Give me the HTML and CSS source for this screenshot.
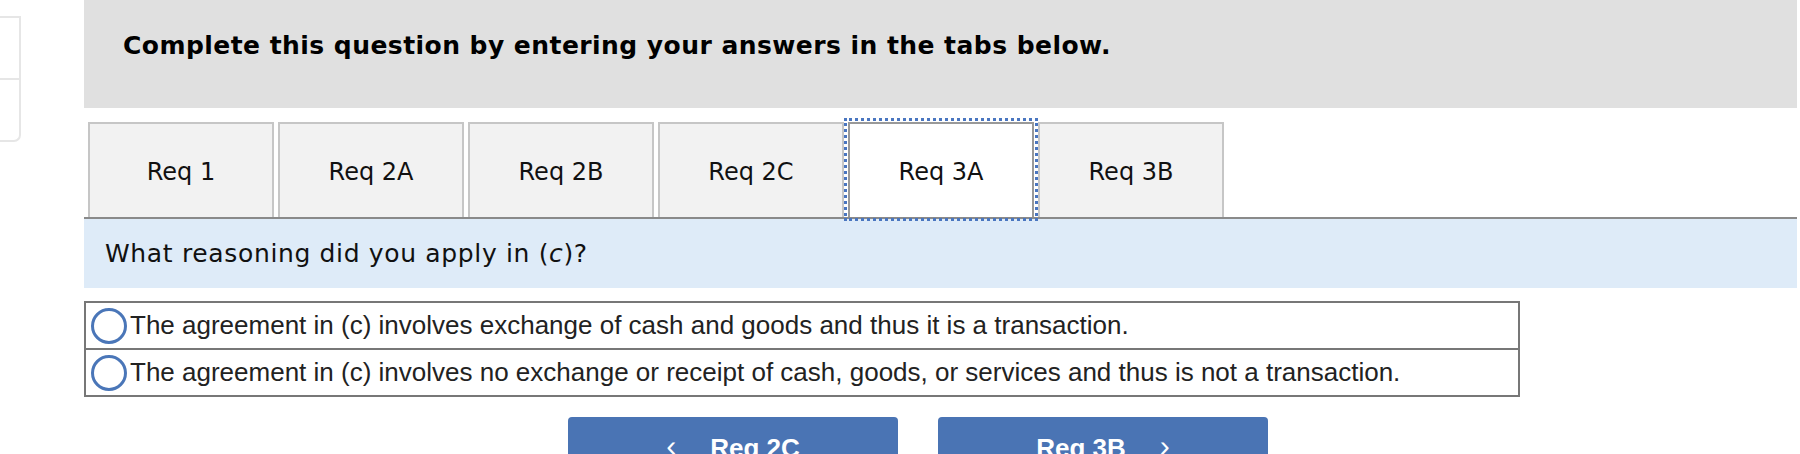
FILE: index.html
```html
<!DOCTYPE html>
<html>
<head>
<meta charset="utf-8">
<link rel="stylesheet" href="styles.css">
</head>
<body>
<div class="page">
  <div class="side">
    <div class="side-cell"></div>
    <div class="side-cell side-last"></div>
  </div>
  <div class="main">
    <div class="header">Complete this question by entering your answers in the tabs below.</div>
    <div class="tabs">
      <div class="tab">Req 1</div>
      <div class="tab">Req 2A</div>
      <div class="tab">Req 2B</div>
      <div class="tab">Req 2C</div>
      <div class="tab tab-active">Req 3A</div>
      <div class="tab">Req 3B</div>
    </div>
    <div class="question">What reasoning did you apply in (<i>c</i>)?</div>
    <div class="options">
      <div class="option"><span class="radio"></span><span class="opt-text">The agreement in (c) involves exchange of cash and goods and thus it is a transaction.</span></div>
      <div class="option"><span class="radio"></span><span class="opt-text">The agreement in (c) involves no exchange or receipt of cash, goods, or services and thus is not a transaction.</span></div>
    </div>
    <div class="nav">
      <div class="btn"><span class="chev">&lsaquo;</span><span>Req 2C</span></div>
      <div class="btn"><span>Req 3B</span><span class="chev">&rsaquo;</span></div>
    </div>
  </div>
</div>
</body>
</html>
```

FILE: styles.css
```css
html, body {
  margin: 0;
  padding: 0;
  background: #ffffff;
}
body {
  width: 1800px;
  height: 454px;
  overflow: hidden;
}
.page {
  display: flex;
  align-items: flex-start;
}
.side {
  width: 21px;
  margin-top: 16px;
  flex-shrink: 0;
  display: flex;
  flex-direction: column;
}
.side-cell {
  height: 60px;
  border: 2px solid #e6e6e6;
  border-left: none;
}
.side-last {
  border-top: none;
  border-bottom-right-radius: 7px;
}
.main {
  margin-left: 63px;
  width: 1713px;
  display: flex;
  flex-direction: column;
}
.header {
  height: 108px;
  background: #e0e0e0;
  box-sizing: border-box;
  padding: 31px 0 0 39px;
  font-family: "DejaVu Sans", Verdana, sans-serif;
  font-weight: bold;
  font-size: 25px;
  letter-spacing: 0.45px;
  color: #000;
}
.tabs {
  display: flex;
  gap: 4px;
  margin-top: 14px;
  padding-left: 4px;
  height: 95px;
}
.tab {
  width: 186px;
  box-sizing: border-box;
  border: 2px solid #c6c6c6;
  border-bottom: none;
  background: #f2f2f2;
  display: flex;
  align-items: center;
  justify-content: center;
  font-family: "DejaVu Sans", Verdana, sans-serif;
  font-size: 24px;
  color: #111;
  padding-top: 2px;
}
.tab-active {
  background: #ffffff;
  border-color: #999999;
  outline: 3px dotted #4a76c0;
  outline-offset: 1px;
  position: relative;
  z-index: 1;
}
.question {
  border-top: 2px solid #8a8a8a;
  background: #deebf8;
  height: 71px;
  box-sizing: border-box;
  padding: 20px 0 0 21px;
  font-family: "DejaVu Sans", Verdana, sans-serif;
  font-size: 25px;
  letter-spacing: 0.65px;
  color: #111;
}
.options {
  margin-top: 13px;
  width: 1436px;
  border: 2px solid #777777;
  box-sizing: border-box;
}
.option {
  height: 45px;
  display: flex;
  align-items: center;
  padding-left: 5px;
}
.option + .option {
  border-top: 2px solid #777777;
}
.radio {
  width: 30px;
  height: 30px;
  border: 3px solid #4a76b8;
  border-radius: 50%;
  flex-shrink: 0;
  margin-right: 3px;
}
.opt-text {
  font-family: "Liberation Sans", Arial, sans-serif;
  font-size: 26px;
  color: #222;
}
.nav {
  display: flex;
  gap: 40px;
  margin-top: 20px;
  padding-left: 484px;
}
.btn {
  width: 330px;
  height: 60px;
  background: #4a74b4;
  border-radius: 4px;
  color: #fff;
  display: flex;
  justify-content: center;
  align-items: flex-start;
  gap: 34px;
  padding-top: 16px;
  box-sizing: border-box;
  font-family: "Liberation Sans", Arial, sans-serif;
  font-weight: bold;
  font-size: 26px;
}
.chev {
  font-weight: normal;
  font-size: 30px;
  line-height: 26px;
}
```
